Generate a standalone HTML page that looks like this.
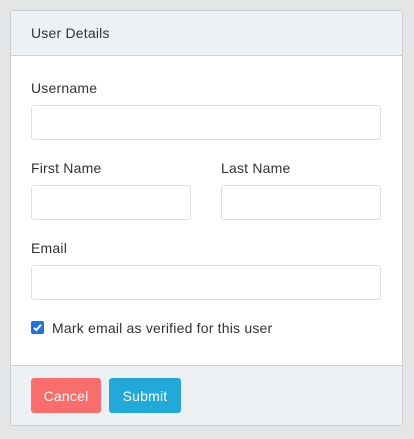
<!DOCTYPE html>
<html><head><style>
body{margin:0;background:#e4e5e7;font-family:"Liberation Sans",sans-serif;width:414px;height:439px;position:relative;overflow:hidden;color:#333;letter-spacing:0.2px}
.card{position:absolute;left:10px;top:10px;width:391px;height:414px;background:#fff;border:1px solid #ccd0d4;border-radius:3px;overflow:hidden}
.hd{position:absolute;left:0;top:0;right:0;height:44px;background:#eef1f4;border-bottom:1px solid #ccd0d4;font-size:14px;line-height:45px;padding-left:20px}
.ft{position:absolute;left:0;bottom:0;right:0;height:59px;background:#eef1f4;border-top:1px solid #ccd0d4}
.lbl{position:absolute;font-size:14px;color:#333}
.in{position:absolute;height:33px;border:1px solid #dcdfe3;border-radius:3px;background:#fff;box-sizing:border-box}
.btn{position:absolute;top:12px;height:35px;border-radius:3px;color:#fff;font-size:14px;line-height:36px;text-align:center}
</style></head><body>
<div class="card">
<div class="hd">User Details</div>
<div class="lbl" style="left:20px;top:69px">Username</div>
<div class="in" style="left:20px;top:94px;width:350px;height:35px"></div>
<div class="lbl" style="left:20px;top:149px">First Name</div>
<div class="lbl" style="left:210px;top:149px">Last Name</div>
<div class="in" style="left:20px;top:174px;width:160px;height:35px"></div>
<div class="in" style="left:210px;top:174px;width:160px;height:35px"></div>
<div class="lbl" style="left:20px;top:229px">Email</div>
<div class="in" style="left:20px;top:254px;width:350px;height:35px"></div>
<div style="position:absolute;left:20px;top:310px;width:13px;height:13px;background:#1a73e8;border-radius:2px">
<svg width="13" height="13" viewBox="0 0 13 13"><path d="M3 6.8l2.3 2.4L10 3.8" stroke="#fff" stroke-width="2" fill="none"/></svg></div>
<div class="lbl" style="left:41px;top:309px">Mark email as verified for this user</div>
<div class="ft">
<div class="btn" style="left:20px;width:70px;background:#f96d6d">Cancel</div>
<div class="btn" style="left:98px;width:72px;background:#21a9d9">Submit</div>
</div>
</div>
</body></html>
